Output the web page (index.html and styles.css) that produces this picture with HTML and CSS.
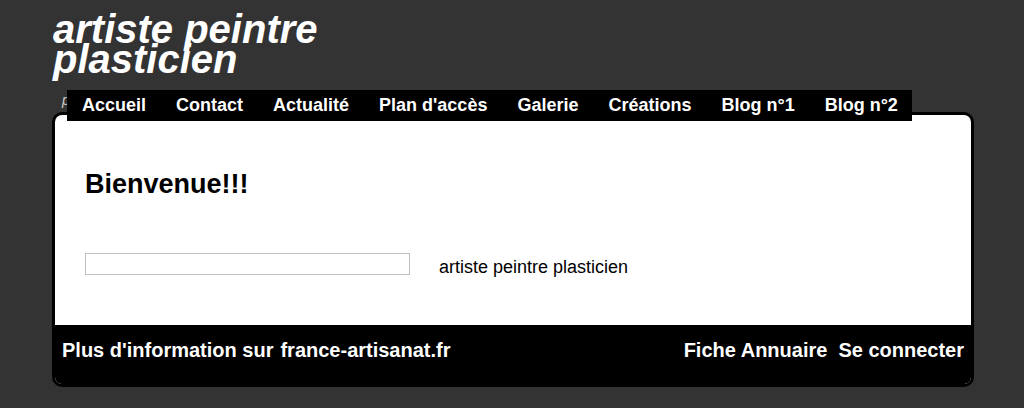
FILE: index.html
```html
<!DOCTYPE html>
<html lang="fr">
<head>
<meta charset="utf-8">
<title>artiste peintre plasticien</title>
<link rel="stylesheet" href="styles.css">
</head>
<body>
<div class="page">
  <header class="header">
    <div class="site-title">artiste peintre<br>plasticien</div>
    <div class="subtitle">peintre plasticien</div>
    <nav class="nav">
      <a href="#">Accueil</a>
      <a href="#">Contact</a>
      <a href="#">Actualité</a>
      <a href="#">Plan d'accès</a>
      <a href="#">Galerie</a>
      <a href="#">Créations</a>
      <a href="#">Blog n°1</a>
      <a href="#">Blog n°2</a>
    </nav>
  </header>
  <div class="card">
    <main class="content">
      <h1 class="welcome">Bienvenue!!!</h1>
      <div class="row">
        <div class="box"></div>
        <div class="caption">artiste peintre plasticien</div>
      </div>
    </main>
    <footer class="footer">
      <div class="foot-left"><span>Plus d'information sur</span><a href="#">france-artisanat.fr</a></div>
      <div class="foot-right"><a href="#">Fiche Annuaire</a><a href="#">Se connecter</a></div>
    </footer>
  </div>
</div>
</body>
</html>
```
FILE: styles.css
```css
html, body {
  margin: 0;
  padding: 0;
}
body {
  background: #333333;
  font-family: "Liberation Sans", Arial, sans-serif;
  color: #000;
}
.page {
  width: 922px;
  margin-left: 52px;
}
.header {
  padding-top: 14px;
}
.site-title {
  margin-left: 1px;
  font-size: 40px;
  line-height: 30px;
  font-weight: bold;
  font-style: italic;
  color: #fff;
}
.subtitle {
  margin-top: 16px;
  margin-left: 10px;
  font-size: 14px;
  line-height: 20px;
  font-style: italic;
  color: #ccc;
}
.nav {
  position: relative;
  z-index: 2;
  display: flex;
  width: 845px;
  height: 31px;
  margin-top: -20px;
  margin-left: 15px;
  margin-bottom: -9px;
  background: #000;
}
.nav a {
  padding: 0 15px;
  font-size: 18px;
  font-weight: bold;
  line-height: 31px;
  white-space: nowrap;
  color: #fff;
  text-decoration: none;
}
.card {
  position: relative;
  border: 3px solid #000;
  border-radius: 10px;
  overflow: hidden;
  background: #fff;
}
.content {
  padding: 54px 30px 47px 30px;
}
.welcome {
  margin: 0;
  font-size: 27px;
  line-height: 31px;
  font-weight: bold;
}
.row {
  display: flex;
  align-items: flex-start;
  gap: 29px;
  margin-top: 53px;
}
.box {
  width: 325px;
  height: 22px;
  box-sizing: border-box;
  border: 1px solid #c0c0c0;
}
.caption {
  padding-top: 4px;
  font-size: 18px;
}
.footer {
  display: flex;
  justify-content: space-between;
  height: 59px;
  box-sizing: border-box;
  padding: 14px 7px 0 7px;
  background: #000;
  font-size: 20px;
  font-weight: bold;
  white-space: nowrap;
  color: #fff;
}
.footer a {
  color: #fff;
  text-decoration: none;
}
.foot-left span {
  margin-right: 7px;
}
.foot-right a + a {
  margin-left: 11px;
}
```
